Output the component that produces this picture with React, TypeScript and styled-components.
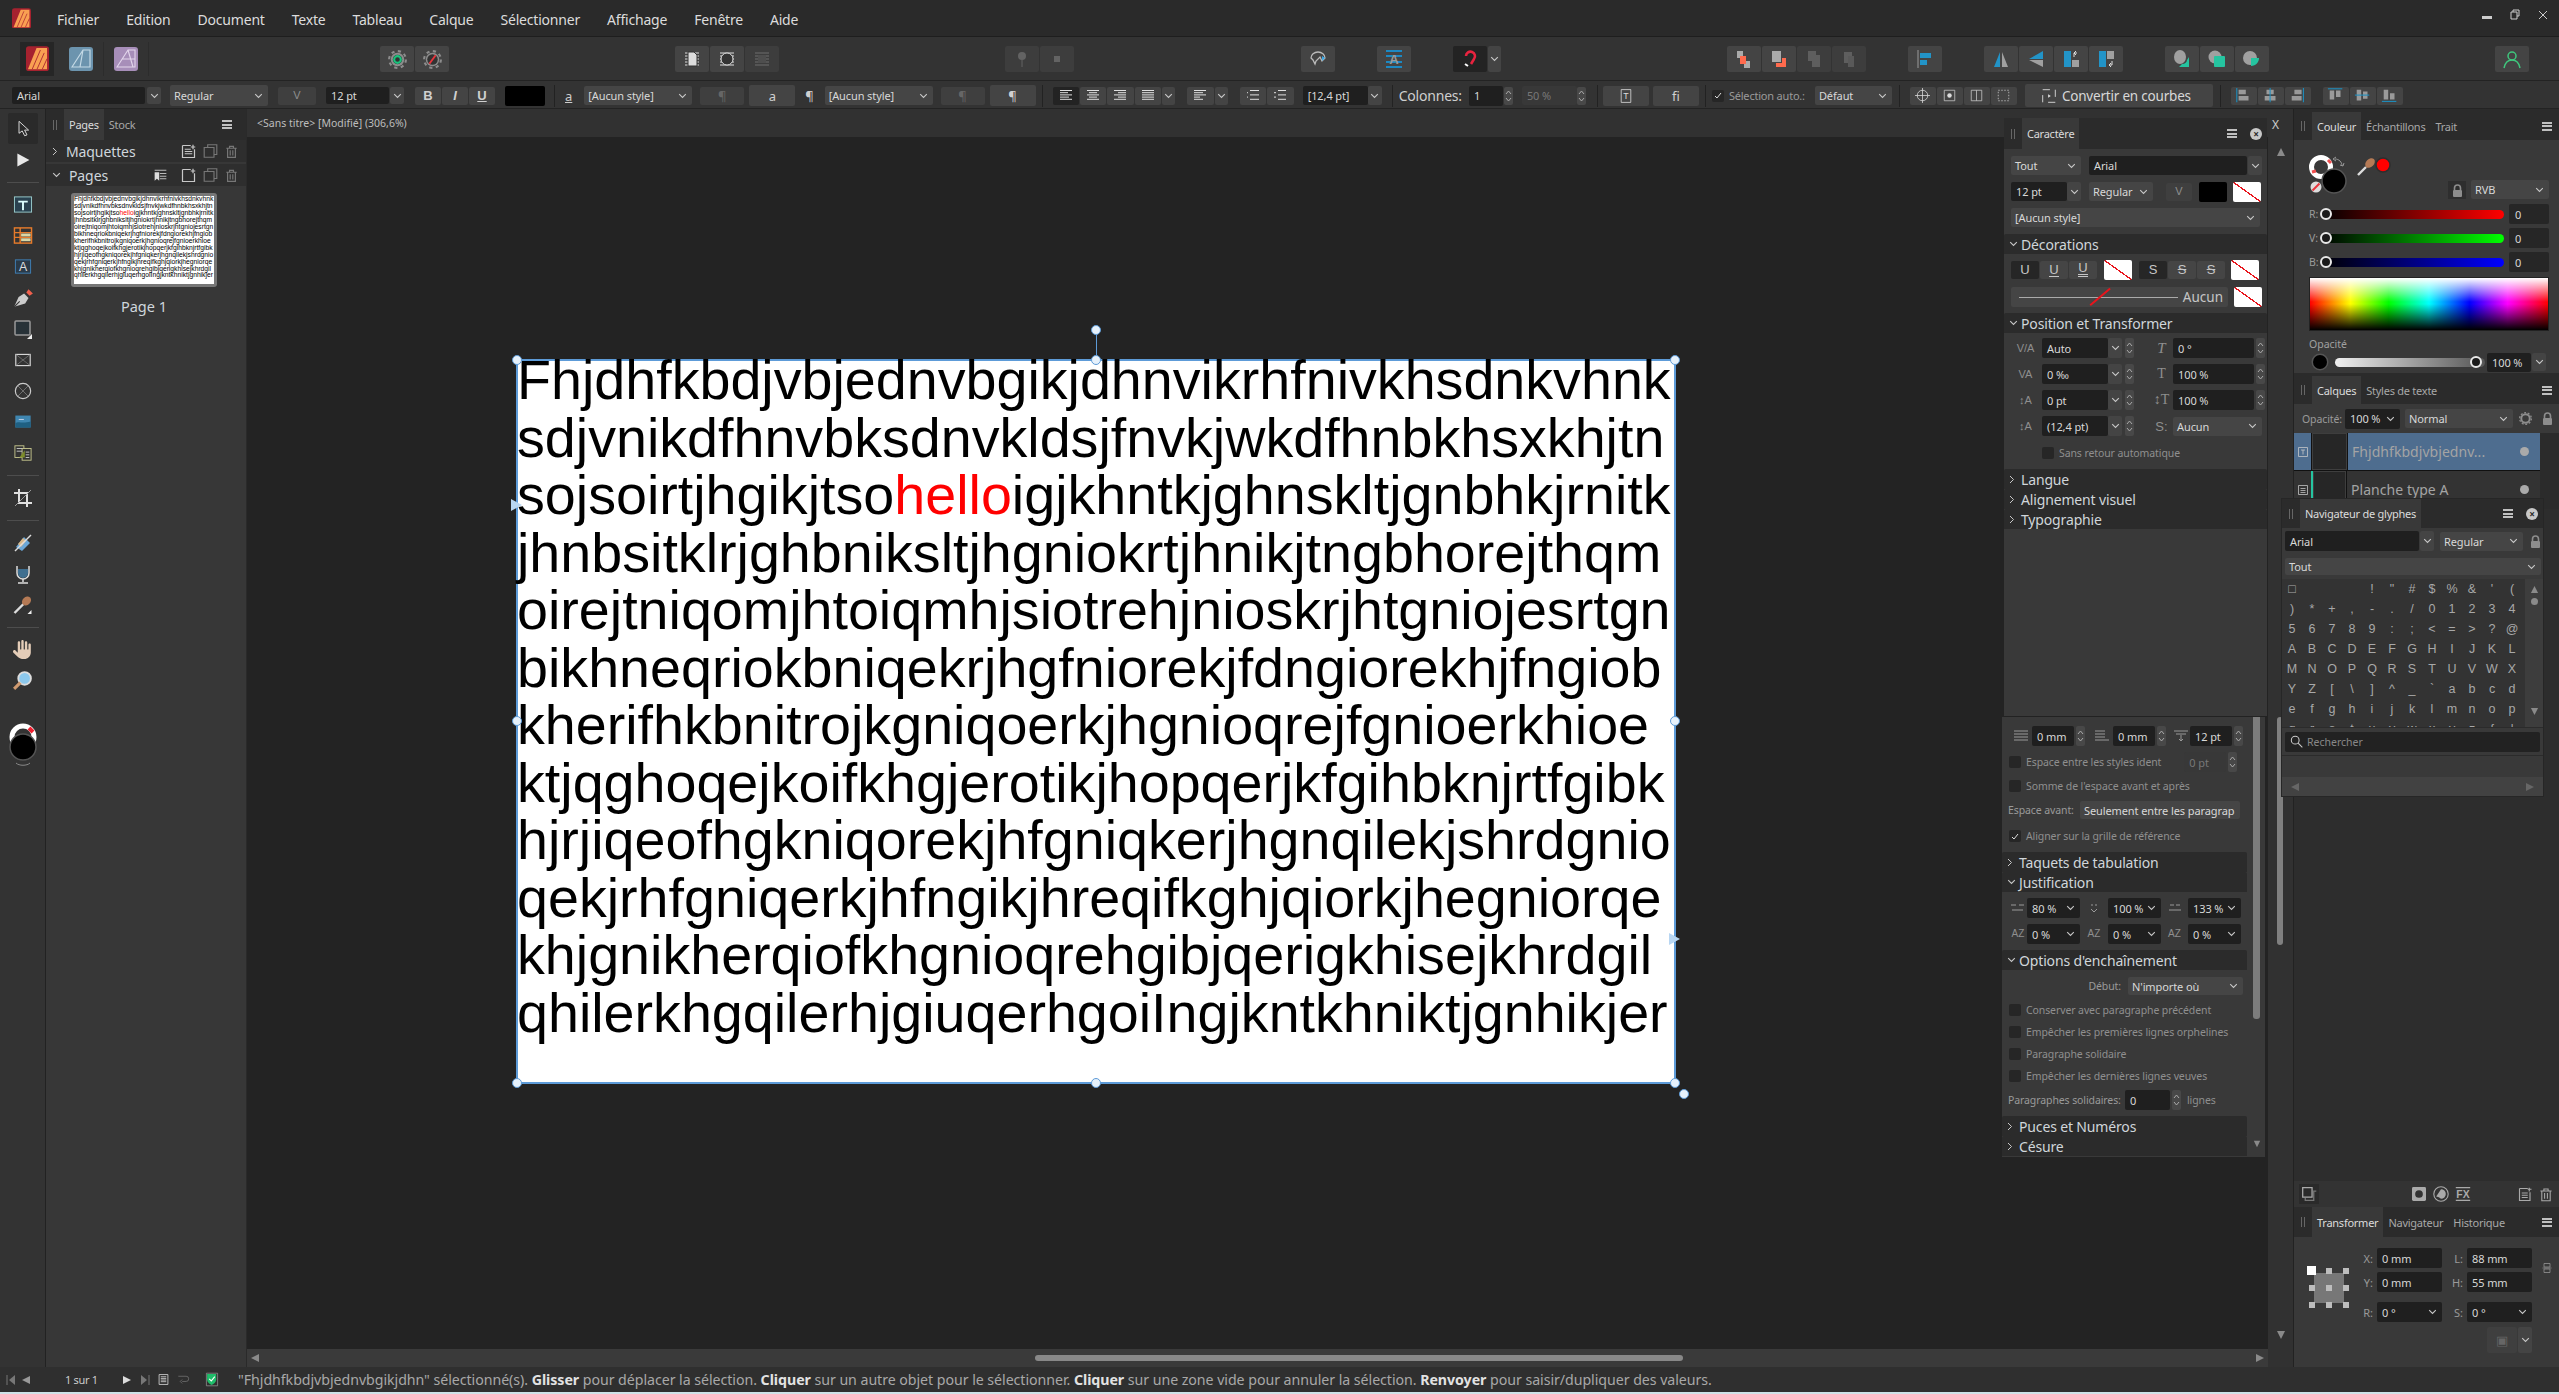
import React from 'react';
import styled, { createGlobalStyle } from 'styled-components';
import { FaHand } from 'react-icons/fa6';

const ui = `"Noto Sans", "Open Sans", sans-serif`;

const GlobalStyle = createGlobalStyle`
  html, body { margin: 0; padding: 0; background: #2a2a2a; }
  * { box-sizing: border-box; }
`;

const Window = styled.div`
  position: relative;
  width: 2559px;
  height: 1394px;
  display: flex;
  flex-direction: column;
  overflow: hidden;
  font-family: ${ui};
  color: #cfcfcf;
  background: #2a2a2a;
`;

/* ---------- menu ---------- */

const MenuBar = styled.div`
  height: 37px;
  flex: none;
  display: flex;
  align-items: center;
  padding-left: 12px;
  background: #2a2a2a;
  border-bottom: 1px solid #1e1e1e;
`;
const MenuItem = styled.span<{ $ml: number }>`
  margin-left: ${(p) => p.$ml}px;
  padding-top: 3px;
  font-size: 14px;
  letter-spacing: -0.2px;
  color: #dcdcdc;
`;
const WindowControls = styled.div`
  margin-left: auto;
  display: flex;
  align-items: center;
  gap: 18px;
  padding: 0 11px 6px 0;
  color: #d0d0d0;
`;

/* ---------- toolbars ---------- */

const MainBar = styled.div`
  height: 44px;
  flex: none;
  display: flex;
  align-items: center;
  padding: 1px 0 0 20px;
  background: #333333;
  border-bottom: 1px solid #232323;
`;
const AppSlot = styled.div<{ $active?: boolean; $ml?: number }>`
  width: ${(p) => (p.$active ? 34 : 45)}px;
  height: 34px;
  margin-left: ${(p) => p.$ml ?? 0}px;
  display: flex;
  align-items: center;
  justify-content: center;
  background: ${(p) => (p.$active ? '#262626' : 'transparent')};
  border-right: ${(p) => (p.$active ? 'none' : '1px solid #2c2c2c')};
`;
const ToolBtn = styled.div<{ $ml?: number; $dim?: boolean; $dark?: boolean; $w?: number }>`
  width: ${(p) => p.$w ?? 34}px;
  height: 26px;
  margin-left: ${(p) => p.$ml ?? 1}px;
  flex: none;
  display: flex;
  align-items: center;
  justify-content: center;
  border-radius: 2px;
  color: #bbb;
  background: ${(p) => (p.$dark ? '#232323' : p.$dim ? '#3d3d3d' : '#444444')};
  & > svg { opacity: ${(p) => (p.$dim ? 0.3 : 1)}; }
`;
const ContextBar = styled.div`
  height: 28px;
  flex: none;
  display: flex;
  align-items: center;
  padding: 2px 0 0 12px;
  background: #333333;
  border-bottom: 1px solid #232323;
`;
const Input = styled.div<{ $w: number; $ml?: number; $h?: number; $dim?: boolean; $right?: boolean }>`
  width: ${(p) => p.$w}px;
  height: ${(p) => p.$h ?? 19}px;
  margin-left: ${(p) => p.$ml ?? 0}px;
  flex: none;
  display: flex;
  align-items: center;
  justify-content: space-between;
  padding: 0 5px;
  border-radius: 2px;
  font-size: 11px;
  letter-spacing: -0.1px;
  white-space: nowrap;
  overflow: hidden;
  color: ${(p) => (p.$dim ? '#777' : '#d8d8d8')};
  background: ${(p) => (p.$dim ? '#383838' : '#1f1f1f')};
`;
const Select = styled.div<{ $w: number; $ml?: number; $h?: number }>`
  width: ${(p) => p.$w}px;
  height: ${(p) => p.$h ?? 19}px;
  margin-left: ${(p) => p.$ml ?? 0}px;
  flex: none;
  display: flex;
  align-items: center;
  justify-content: space-between;
  padding: 0 5px 0 4px;
  border-radius: 2px;
  font-size: 11px;
  letter-spacing: -0.1px;
  white-space: nowrap;
  overflow: hidden;
  color: #d8d8d8;
  background: #454545;
`;
const ChevBtn = styled.div<{ $ml?: number; $h?: number; $w?: number }>`
  width: ${(p) => p.$w ?? 14}px;
  height: ${(p) => p.$h ?? 19}px;
  margin-left: ${(p) => p.$ml ?? 1}px;
  flex: none;
  display: flex;
  align-items: center;
  justify-content: center;
  border-radius: 2px;
  background: #444444;
  color: #ccc;
`;
const SpinBtn = styled.div<{ $ml?: number; $h?: number }>`
  width: 9px;
  height: ${(p) => p.$h ?? 19}px;
  margin-left: ${(p) => p.$ml ?? 2}px;
  flex: none;
  display: flex;
  flex-direction: column;
  align-items: center;
  justify-content: center;
  gap: 2px;
  border-radius: 2px;
  background: #484848;
`;
const SmallBtn = styled.div<{ $w: number; $ml?: number; $h?: number; $dim?: boolean; $dark?: boolean }>`
  width: ${(p) => p.$w}px;
  height: ${(p) => p.$h ?? 18}px;
  margin-left: ${(p) => p.$ml ?? 1}px;
  flex: none;
  display: flex;
  align-items: center;
  justify-content: center;
  border-radius: 2px;
  font-size: 13px;
  color: ${(p) => (p.$dim ? '#666' : '#d0d0d0')};
  background: ${(p) => (p.$dark ? '#232323' : p.$dim ? '#3f3f3f' : '#444444')};
`;
const StyleBold = styled.b<{ $i?: boolean; $u?: boolean }>`
  font-family: "Liberation Sans", sans-serif;
  font-size: 13px;
  font-style: ${(p) => (p.$i ? 'italic' : 'normal')};
  text-decoration: ${(p) => (p.$u ? 'underline' : 'none')};
`;
const Swatch = styled.div<{ $w: number; $h?: number; $ml?: number }>`
  width: ${(p) => p.$w}px;
  height: ${(p) => p.$h ?? 20}px;
  margin-left: ${(p) => p.$ml ?? 0}px;
  flex: none;
  background: #000;
  border-radius: 2px;
`;
const NoneSwatch = styled.div<{ $ml?: number }>`
  width: 28px;
  height: 20px;
  margin-left: ${(p) => p.$ml ?? 0}px;
  flex: none;
  border-radius: 2px;
  background: linear-gradient(to top right, #fff 0 48%, #e8141c 48% 52%, #fff 52% 100%);
`;
const Sep = styled.div<{ $ml: number }>`
  width: 1px;
  height: 22px;
  margin-left: ${(p) => p.$ml}px;
  flex: none;
  background: #222;
`;
const BarLabel = styled.span<{ $ml: number; $size?: number; $dim?: boolean }>`
  margin-left: ${(p) => p.$ml}px;
  flex: none;
  font-size: ${(p) => p.$size ?? 11}px;
  letter-spacing: -0.2px;
  white-space: nowrap;
  color: ${(p) => (p.$dim ? '#9a9a9a' : '#cfcfcf')};
`;
const GlyphMark = styled.span<{ $ml: number }>`
  margin-left: ${(p) => p.$ml}px;
  font-size: 13px;
  color: #ccc;
  text-decoration: underline;
`;
const CheckBox = styled.div<{ $ml?: number; $checked?: boolean }>`
  width: 12px;
  height: 12px;
  margin-left: ${(p) => p.$ml ?? 0}px;
  flex: none;
  display: flex;
  align-items: center;
  justify-content: center;
  border-radius: 2px;
  background: #262626;
`;
const ConvertBtn = styled.div`
  width: 188px;
  height: 23px;
  margin-left: 8px;
  display: flex;
  align-items: center;
  gap: 4px;
  padding-left: 15px;
  flex: none;
  font-size: 13.5px;
  letter-spacing: -0.2px;
  border-radius: 2px;
  color: #d8d8d8;
  background: #444444;
`;

/* ---------- workspace ---------- */

const Workspace = styled.div`
  position: relative;
  flex: 1;
  min-height: 0;
  display: flex;
`;
const ToolColumn = styled.div`
  width: 46px;
  flex: none;
  display: flex;
  flex-direction: column;
  align-items: center;
  padding-top: 4px;
  background: #333333;
  border-right: 1px solid #222;
`;
const ToolSlot = styled.div<{ $active?: boolean }>`
  width: 30px;
  height: 31px;
  flex: none;
  display: flex;
  align-items: center;
  justify-content: center;
  border-radius: 2px;
  background: ${(p) => (p.$active ? '#2a2a2a' : 'transparent')};
`;
const ToolSep = styled.div`
  width: 32px;
  height: 1px;
  margin: 6.5px 0;
  flex: none;
  background: #4d4d4d;
`;
const ColorWidget = styled.div`
  margin-top: 24px;
  flex: none;
`;

const PagesPanel = styled.div`
  width: 201px;
  flex: none;
  display: flex;
  flex-direction: column;
  background: #373737;
  border-right: 1px solid #2a2a2a;
`;
const PanelHeader = styled.div<{ $h?: number }>`
  height: ${(p) => p.$h ?? 29}px;
  flex: none;
  display: flex;
  align-items: stretch;
  background: #2b2b2b;
`;
const Grip = styled.div`
  width: 18px;
  flex: none;
  display: flex;
  align-items: center;
  justify-content: center;
  gap: 2px;
  &::before, &::after { content: ''; width: 1px; height: 10px; background: #666; }
`;
const Tab = styled.div<{ $active?: boolean }>`
  padding: 0 5px;
  display: flex;
  align-items: center;
  font-size: 11px;
  letter-spacing: -0.25px;
  white-space: nowrap;
  color: ${(p) => (p.$active ? '#dcdcdc' : '#a8a8a8')};
  background: ${(p) => (p.$active ? '#393939' : 'transparent')};
`;
const Hamburger = styled.div<{ $mr?: number }>`
  margin-left: auto;
  margin-right: ${(p) => p.$mr ?? 7}px;
  align-self: center;
  width: 10px;
  height: 9px;
  flex: none;
  border-top: 2px solid #c0c0c0;
  border-bottom: 2px solid #c0c0c0;
  position: relative;
  &::after {
    content: '';
    position: absolute;
    left: 0;
    right: 0;
    top: 1.5px;
    height: 2px;
    background: #c0c0c0;
  }
`;
const CloseDot = styled.div`
  width: 12px;
  height: 12px;
  margin-right: 5px;
  margin-left: 6px;
  align-self: center;
  flex: none;
  border-radius: 50%;
  background: #c8c8c8;
  color: #2b2b2b;
  font-size: 10px;
  font-weight: 700;
  line-height: 12px;
  text-align: center;
`;
const SectionRow = styled.div<{ $mt?: number }>`
  height: 22px;
  margin-top: ${(p) => p.$mt ?? 0}px;
  flex: none;
  display: flex;
  align-items: center;
  padding-left: 6px;
  background: #2e2e2e;
  font-size: 14px;
  letter-spacing: -0.1px;
  color: #cfd6dc;
`;
const SectionName = styled.span`
  margin-left: 8px;
`;
const SectionIcons = styled.div`
  margin-left: auto;
  display: flex;
  align-items: center;
  gap: 7px;
  padding-right: 8px;
`;
const PagesFlag = styled.span`
  display: flex;
  margin-right: 6px;
`;
const Thumb = styled.div`
  width: 146px;
  height: 94px;
  margin: 7px 0 0 25px;
  flex: none;
  padding: 3px;
  border-radius: 3px;
  background: #777;
`;
const ThumbPage = styled.div`
  width: 140px;
  height: 88px;
  overflow: hidden;
  background: #fff;
  color: #000;
  font-family: "Liberation Sans", Arial, sans-serif;
  font-size: 6.72px;
  line-height: 6.95px;
  white-space: nowrap;
`;
const ThumbLabel = styled.div`
  margin-top: 9px;
  margin-left: 25px;
  width: 146px;
  text-align: center;
  font-size: 14.5px;
  color: #cfd6dc;
`;

const CanvasColumn = styled.div`
  width: 2021px;
  flex: none;
  display: flex;
  flex-direction: column;
`;
const DocTab = styled.div`
  height: 28px;
  flex: none;
  display: flex;
  align-items: center;
  padding-left: 10px;
  font-size: 10.5px;
  color: #bdbdbd;
  background: #313131;
`;
const Canvas = styled.div`
  flex: 1;
  min-height: 0;
  padding: 223px 0 0 270px;
  background: #232323;
  overflow: hidden;
`;
const Page = styled.div`
  position: relative;
  width: 1158px;
  height: 723px;
  background: #fff;
  outline: 2px solid #5d9bd8;
  outline-offset: -1px;
`;
const PageText = styled.div`
  margin-top: -8px;
  color: #000;
  font-family: "Liberation Sans", Arial, sans-serif;
  font-size: 55.65px;
  line-height: 57.5px;
  white-space: nowrap;
  position: absolute;
  top: 0;
  left: 0;
`;
const Red = styled.span`
  color: #ff0000;
`;
const Handle = styled.div<{ $x: number; $y: number }>`
  position: absolute;
  left: ${(p) => p.$x - 5}px;
  top: ${(p) => p.$y - 5}px;
  width: 10px;
  height: 10px;
  border-radius: 50%;
  background: #e6f1fb;
  border: 1.5px solid #5d9bd8;
`;
const RotateStem = styled.div`
  position: absolute;
  left: 579px;
  top: -30px;
  width: 1px;
  height: 30px;
  background: #5d9bd8;
`;
const TextPort = styled.div<{ $x: number; $y: number }>`
  position: absolute;
  left: ${(p) => p.$x - 6}px;
  top: ${(p) => p.$y - 6}px;
  width: 0;
  height: 0;
  border-left: 11px solid #b8d6f2;
  border-top: 6px solid transparent;
  border-bottom: 6px solid transparent;
`;
const HScroll = styled.div`
  height: 18px;
  flex: none;
  display: flex;
  align-items: center;
  justify-content: space-between;
  padding: 0 3px;
  position: relative;
  background: #3a3a3a;
`;
const HThumb = styled.div`
  position: absolute;
  left: 788px;
  top: 6px;
  width: 648px;
  height: 6px;
  border-radius: 3px;
  background: #888;
`;
const CanvasGutter = styled.div`
  width: 26px;
  flex: none;
  position: relative;
  background: #313131;
  border-right: 1px solid #222;
`;
const GutterClose = styled.div`
  position: absolute;
  top: 7px;
  left: 4px;
  font-size: 12px;
  color: #ccc;
`;
const GutterUp = styled.div`
  position: absolute;
  top: 31px;
  left: 8px;
`;
const GutterThumb = styled.div`
  position: absolute;
  top: 608px;
  left: 9px;
  width: 6px;
  height: 228px;
  border-radius: 3px;
  background: #808080;
`;
const GutterDown = styled.div`
  position: absolute;
  bottom: 22px;
  left: 8px;
`;

/* ---------- right dock ---------- */

const RightDock = styled.div`
  flex: 1;
  min-width: 0;
  display: flex;
  flex-direction: column;
  padding-top: 3px;
  background: #2b2b2b;
`;
const ColorBody = styled.div`
  height: 233px;
  flex: none;
  padding: 0 10px 0 15px;
  position: relative;
  background: #393939;
`;
const ColorWell = styled.div`
  height: 62px;
  display: flex;
  justify-content: flex-end;
  align-items: flex-end;
  gap: 5px;
  padding-bottom: 3px;
`;
const LockBtn = styled.div`
  width: 18px;
  height: 18px;
  display: flex;
  align-items: center;
  justify-content: center;
  background: #2e2e2e;
`;
const ColorCluster = styled.svg`
  position: absolute;
  left: 14px;
  top: 10px;
`;
const SliderRow = styled.div`
  height: 24px;
  display: flex;
  align-items: center;
  font-size: 10.5px;
  color: #9a9a9a;
`;
const SliderLabel = styled.span`
  width: 12px;
  flex: none;
`;
const Track = styled.div<{ $to: string; $w: number }>`
  position: relative;
  width: ${(p) => p.$w}px;
  height: 9px;
  flex: none;
  border-radius: 5px;
  background: linear-gradient(to right, #000, ${(p) => p.$to});
`;
const Knob = styled.div<{ $x: number }>`
  position: absolute;
  left: ${(p) => p.$x - 6}px;
  top: -1.5px;
  width: 12px;
  height: 12px;
  border-radius: 50%;
  background: #1a1a1a;
  border: 2px solid #e8e8e8;
`;
const ValueBox = styled.div`
  width: 40px;
  height: 20px;
  margin-left: 5px;
  flex: none;
  display: flex;
  align-items: center;
  padding-left: 6px;
  font-size: 11px;
  color: #d8d8d8;
  border-radius: 2px;
  background: #262626;
`;
const Spectrum = styled.div`
  height: 54px;
  margin-top: 3px;
  border: 1px solid #222;
  background:
    linear-gradient(to bottom, #fff 0%, rgba(255, 255, 255, 0) 46%, rgba(0, 0, 0, 0) 50%, #000 100%),
    linear-gradient(to right, #f00 0%, #ff0 17%, #0f0 33%, #0ff 50%, #00f 67%, #f0f 83%, #f00 100%);
`;
const SmallCaption = styled.div`
  margin-top: 6px;
  font-size: 10.5px;
  color: #a0a0a0;
`;
const OpacityRow = styled.div`
  height: 22px;
  display: flex;
  align-items: center;
`;
const OpacityDot = styled.div`
  width: 14px;
  height: 14px;
  margin-left: 4px;
  flex: none;
  border-radius: 50%;
  background: #000;
  box-shadow: 0 0 0 1.5px #555;
`;
const OpacityTrack = styled.div`
  position: relative;
  width: 150px;
  height: 9px;
  margin-left: 8px;
  flex: none;
  border-radius: 5px;
  background: linear-gradient(to right, #f0f0f0, #555);
`;
const LayersPanel = styled.div`
  flex: 1;
  min-height: 0;
  margin-top: 3px;
  display: flex;
  flex-direction: column;
  background: #2b2b2b;
`;
const LayerControls = styled.div`
  height: 29px;
  flex: none;
  display: flex;
  align-items: center;
  padding-left: 8px;
  background: #393939;
`;
const LayerRow = styled.div<{ $selected?: boolean; $h: number }>`
  width: 246px;
  height: ${(p) => p.$h}px;
  flex: none;
  display: flex;
  align-items: stretch;
  background: ${(p) => (p.$selected ? '#4e6d8f' : '#333')};
  border-bottom: 1px solid #111;
`;
const LayerKind = styled.div`
  width: 18px;
  flex: none;
  display: flex;
  align-items: center;
  justify-content: center;
  border-right: 1px solid #111;
`;
const LayerThumb = styled.div<{ $mark?: boolean }>`
  width: 36px;
  flex: none;
  border-right: 1px solid #111;
  background: #262626;
  border-left: ${(p) => (p.$mark ? '2px solid #25c4a0' : 'none')};
  margin-left: ${(p) => (p.$mark ? '-1px' : 0)};
  box-shadow: inset 0 0 0 1px #3e3e3e;
`;
const LayerName = styled.div`
  flex: 1;
  min-width: 0;
  padding-left: 4px;
  align-self: center;
  font-size: 14px;
  letter-spacing: 0.05px;
  color: #a4a4a4;
  white-space: nowrap;
`;
const LayerDot = styled.div`
  width: 9px;
  height: 9px;
  margin-right: 11px;
  align-self: center;
  flex: none;
  border-radius: 50%;
  background: #aaa;
`;
const LayerEmpty = styled.div`
  flex: 1;
  min-height: 0;
  background: #2d2d2d;
`;
const LayerStrip = styled.div`
  height: 26px;
  flex: none;
  display: flex;
  align-items: center;
  padding: 0 6px 0 5px;
  background: #333;
`;
const StripActive = styled.div`
  width: 20px;
  height: 20px;
  display: flex;
  align-items: center;
  justify-content: center;
  background: #2a2a2a;
`;
const StripCenter = styled.div`
  margin-left: 92px;
  display: flex;
  align-items: center;
  gap: 6px;
`;
const StripRight = styled.div`
  margin-left: auto;
  display: flex;
  align-items: center;
  gap: 6px;
`;
const TransformBody = styled.div`
  height: 130px;
  flex: none;
  display: flex;
  padding: 11px 0 0 15px;
  background: #393939;
`;
const AnchorGrid = styled.div`
  position: relative;
  width: 40px;
  height: 40px;
  margin-top: 20px;
  flex: none;
  display: grid;
  grid-template-columns: repeat(3, 6px);
  grid-template-rows: repeat(3, 6px);
  justify-content: space-between;
  align-content: space-between;
  background: linear-gradient(#777, #777) center / 30px 30px no-repeat;
`;
const AnchorDot = styled.i<{ $on?: boolean }>`
  width: ${(p) => (p.$on ? 9 : 6)}px;
  height: ${(p) => (p.$on ? 9 : 6)}px;
  margin: ${(p) => (p.$on ? '-2px 0 0 -2px' : 0)};
  background: ${(p) => (p.$on ? '#fff' : '#bdbdbd')};
`;
const TransformFields = styled.div`
  margin-left: 13px;
  display: flex;
  flex-direction: column;
`;
const TfRow = styled.div<{ $mt?: number }>`
  height: 20px;
  margin-top: ${(p) => p.$mt ?? 0}px;
  display: flex;
  align-items: center;
`;
const TfLabel = styled.span<{ $w: number }>`
  width: ${(p) => p.$w}px;
  padding-right: 4px;
  flex: none;
  text-align: right;
  font-size: 11px;
  color: #9a9a9a;
`;
const ChainLink = styled.span`
  display: flex;
  margin-left: 10px;
  margin-top: 20px;
`;

/* ---------- floating panels ---------- */

const CharacterFloat = styled.div`
  position: absolute;
  left: 2002px;
  top: 9px;
  width: 267px;
  height: 1039px;
  display: flex;
  flex-direction: column;
`;
const CharacterPanel = styled.div`
  width: 263px;
  margin-left: 2px;
  height: 599px;
  flex: none;
  display: flex;
  flex-direction: column;
  background: #393939;
  border-bottom: 1px solid #222;
`;
const CharHeader = styled(PanelHeader)`
  height: 31px;
  background: #2b2b2b;
`;
const CharRow = styled.div<{ $h?: number; $pl?: number; $mt?: number }>`
  height: ${(p) => p.$h ?? 19}px;
  margin-top: ${(p) => p.$mt ?? 0}px;
  flex: none;
  display: flex;
  align-items: center;
  padding-left: ${(p) => p.$pl ?? 7}px;
`;
const Fold = styled.div<{ $mt?: number }>`
  height: 20px;
  margin-top: ${(p) => p.$mt ?? 0}px;
  flex: none;
  display: flex;
  align-items: center;
  gap: 3px;
  padding-left: 5px;
  font-size: 14px;
  letter-spacing: -0.15px;
  white-space: nowrap;
  color: #d0d6da;
  background: #2b2b2b;
  border-radius: 2px 2px 0 0;
`;
const FoldGlyph = styled.span`
  width: 9px;
  display: flex;
  align-items: center;
  color: #ccc;
`;
const Deco = styled.div<{ $dark?: boolean; $ml?: number }>`
  width: 28px;
  height: 18px;
  flex: none;
  margin-left: ${(p) => p.$ml ?? 0}px;
  margin-right: 1px;
  display: flex;
  align-items: center;
  justify-content: center;
  font-family: "Liberation Sans", sans-serif;
  font-size: 13px;
  color: #c6c6c6;
  border-radius: 2px;
  background: ${(p) => (p.$dark ? '#262626' : '#454545')};
`;
const DecoDouble = styled.span`
  border-bottom: 3px double #c6c6c6;
  line-height: 12px;
`;
const DecoSingle = styled.span`
  border-bottom: 1px solid #c6c6c6;
  line-height: 13px;
`;
const DecoStrike = styled.span`
  text-decoration: line-through;
`;
const DecoLine = styled.div`
  position: relative;
  width: 217px;
  height: 20px;
  margin-left: 0;
  flex: none;
  display: flex;
  align-items: center;
  justify-content: flex-end;
  padding-right: 5px;
  font-size: 13.5px;
  color: #c6c6c6;
  border-radius: 2px;
  background: #454545;
  overflow: hidden;
  &::before {
    content: '';
    position: absolute;
    left: 8px;
    width: 159px;
    top: 10px;
    height: 1px;
    background: #aaa;
  }
  &::after {
    content: '';
    position: absolute;
    left: 76px;
    top: 9px;
    width: 26px;
    height: 1.5px;
    background: #e8141c;
    transform: rotate(-40deg);
  }
`;
const FieldIcon = styled.div<{ $w?: number; $ml?: number }>`
  width: ${(p) => p.$w ?? 23}px;
  margin-left: ${(p) => p.$ml ?? 0}px;
  flex: none;
  display: flex;
  align-items: center;
  justify-content: center;
`;
const Dim = styled.span<{ $ml?: number }>`
  margin-left: ${(p) => p.$ml ?? 5}px;
  font-size: 10.5px;
  letter-spacing: -0.1px;
  white-space: nowrap;
  color: #8f8f8f;
`;
const ParagraphPanel = styled.div`
  position: relative;
  width: 263px;
  flex: 1;
  min-height: 0;
  display: flex;
  background: #393939;
`;
const ParaMain = styled.div`
  width: 245px;
  flex: none;
  display: flex;
  flex-direction: column;
`;
const ParaScrollThumb = styled.div`
  position: absolute;
  left: 251px;
  top: 0;
  width: 7px;
  height: 302px;
  border-radius: 0 0 3px 3px;
  background: #7c7c7c;
`;
const ParaScrollDown = styled.div`
  position: absolute;
  left: 251px;
  bottom: 4px;
`;
const RowLabel = styled.span<{ $w?: number; $right?: boolean }>`
  width: ${(p) => (p.$w ? `${p.$w}px` : 'auto')};
  flex: none;
  text-align: ${(p) => (p.$right ? 'right' : 'left')};
  font-size: 10.5px;
  letter-spacing: -0.1px;
  white-space: nowrap;
  color: #9a9a9a;
`;

const GlyphFloat = styled.div`
  position: absolute;
  left: 2282px;
  top: 390px;
  width: 261px;
  height: 297px;
  display: flex;
  flex-direction: column;
  background: #393939;
  box-shadow: 0 0 0 1px #262626;
`;
const GlyphFilters = styled.div`
  flex: none;
  display: flex;
  flex-direction: column;
  gap: 7px;
  padding: 3px 2px 4px 3px;
`;
const GlyphRow = styled.div`
  display: flex;
  align-items: center;
`;
const GlyphBody = styled.div`
  height: 148px;
  flex: none;
  display: flex;
  background: #333;
  overflow: hidden;
`;
const GlyphGrid = styled.div`
  width: 243px;
  flex: none;
  display: grid;
  grid-template-columns: repeat(12, 20px);
  grid-auto-rows: 20px;
  font-family: "Liberation Sans", Arial, sans-serif;
  font-size: 12.5px;
  color: #a8a8a8;
`;
const GlyphCell = styled.span`
  display: flex;
  align-items: center;
  justify-content: center;
`;
const GlyphScroll = styled.div`
  flex: 1;
  display: flex;
  flex-direction: column;
  align-items: center;
  padding: 6px 0;
  gap: 4px;
  background: #3d3d3d;
`;
const GlyphScrollDot = styled.div`
  width: 7px;
  height: 7px;
  border-radius: 50%;
  background: #8a8a8a;
`;
const GlyphPush = styled.div`
  margin-top: auto;
`;
const SearchBar = styled.div`
  height: 29px;
  flex: none;
  display: flex;
  align-items: center;
  padding: 0 3px;
  border-top: 1px solid #2b2b2b;
  border-bottom: 1px solid #2b2b2b;
`;
const SearchInput = styled.div`
  width: 255px;
  height: 20px;
  display: flex;
  align-items: center;
  gap: 4px;
  padding-left: 5px;
  font-size: 10.5px;
  color: #888;
  border-radius: 2px;
  background: #222;
`;
const GlyphFoot = styled.div`
  flex: 1;
  margin-top: 21px;
  display: flex;
  align-items: center;
  justify-content: space-between;
  padding: 0 8px;
  background: #424242;
`;
const SmallIconWrap = styled.div`
  width: 20px;
  margin-left: 2px;
  flex: none;
  display: flex;
  align-items: center;
  justify-content: center;
`;

/* ---------- status ---------- */

const StatusBar = styled.div`
  height: 25px;
  flex: none;
  display: flex;
  align-items: center;
  padding-left: 6px;
  background: #2f2f2f;
`;
const NavGroup = styled.div<{ $ml?: number; $gap?: number }>`
  margin-left: ${(p) => p.$ml ?? 0}px;
  display: flex;
  align-items: center;
  gap: ${(p) => p.$gap ?? 5}px;
`;
const PageCount = styled.span`
  margin-left: 34px;
  width: 34px;
  font-size: 11px;
  letter-spacing: -0.3px;
  white-space: nowrap;
  color: #ccc;
`;
const StatusText = styled.div`
  margin-left: 19px;
  font-size: 14.2px;
  letter-spacing: -0.05px;
  color: #a8a8a8;
  white-space: nowrap;
  & b { color: #e2e2e2; }
`;
const BottomEdge = styled.div`
  height: 2px;
  flex: none;
  background: #cfe3e8;
`;

/* ---------- drawings ---------- */

type SvgProps = { w?: number; h?: number; children?: React.ReactNode };
const Ico = ({ w = 20, h = 20, children }: SvgProps) => (
  <svg width={w} height={h} viewBox="0 0 20 20" fill="none">{children}</svg>
);

const Chev = ({ c = '#c8c8c8' }: { c?: string }) => (
  <svg width="9" height="6" viewBox="0 0 9 6" fill="none"><path d="M1.2 1.2 4.5 4.5 7.8 1.2" stroke={c} strokeWidth="1.1" /></svg>
);
const ChevRight = () => (
  <svg width="6" height="9" viewBox="0 0 6 9" fill="none"><path d="M1 1l3.5 3.5L1 8" stroke="#c8c8c8" strokeWidth="1" /></svg>
);
const SpinArrows = () => (
  <>
    <svg width="7" height="5" viewBox="0 0 7 5" fill="none"><path d="M1 4l2.5-3L6 4" stroke="#aaa" /></svg>
    <svg width="7" height="5" viewBox="0 0 7 5" fill="none"><path d="M1 1l2.5 3L6 1" stroke="#aaa" /></svg>
  </>
);
const Spin = ({ ml, h }: { ml?: number; h?: number }) => (
  <SpinBtn $ml={ml} $h={h}><SpinArrows /></SpinBtn>
);

const PublisherLogo = ({ s = 24 }: { s?: number }) => (
  <svg width={s} height={s * 1.1} viewBox="0 0 24 26" fill="none">
    <rect width="24" height="26" rx="3" fill="#a6222f" />
    <path d="M2 24 11 2h11v22z" fill="#f9a052" />
    <path d="M6.5 24 15 4M11.5 24 19 7M17 24l5-11" stroke="#a6222f" strokeWidth="0.9" />
  </svg>
);
const DesignerLogo = () => (
  <svg width="24" height="24" viewBox="0 0 24 24" fill="none">
    <rect width="24" height="24" rx="3" fill="#6c94ae" />
    <path d="M3 20 14 3h7v17zM3 20h18M14 3l-3 17" stroke="#c4d9e5" strokeWidth="1.2" />
  </svg>
);
const PhotoLogo = () => (
  <svg width="24" height="24" viewBox="0 0 24 24" fill="none">
    <rect width="24" height="24" rx="3" fill="#a78eb9" />
    <path d="M3 20 14 3h7v17zM8 12h13M14 3l5 17M3 20h14" stroke="#e3d6ec" strokeWidth="1.1" />
  </svg>
);

const Gear = ({ core }: { core: React.ReactNode }) => (
  <Ico w={21} h={21}>
    <circle cx="10" cy="10" r="8" stroke="#8d8d8d" strokeWidth="2" strokeDasharray="3 3.3" />
    <circle cx="10" cy="10" r="6.4" fill="#8d8d8d" />
    {core}
  </Ico>
);
const WrapIcon = ({ kind }: { kind: 'page' | 'disc' | 'x' }) => (
  <Ico>
    <path d="M3 4h14M3 7h14M3 10h14M3 13h14M3 16h14" stroke="#ddd" strokeWidth="1" />
    {kind === 'page' && <path d="M6 3h6l3 3v11H6z" fill="#ddd" stroke="#333" />}
    {kind === 'disc' && <circle cx="10" cy="10" r="6" fill="#333" stroke="#ddd" />}
    {kind === 'x' && <rect x="6" y="6" width="8" height="8" fill="#777" />}
  </Ico>
);
const Squares = ({ a, b, c = '#ff6a4d' }: { a: string; b: string; c?: string }) => (
  <Ico>
    <path d={a} fill="#aaa" />
    <path d={b} fill={c} />
  </Ico>
);
const AlignBars = ({ d, rule }: { d: string; rule: string }) => (
  <Ico w={18} h={18}>
    <path d={d} fill="#9a9a9a" />
    <path d={rule} stroke="#1d8fc0" strokeWidth="1.2" />
  </Ico>
);
const TextAlign = ({ rows }: { rows: number[][] }) => (
  <svg width="14" height="14" viewBox="0 0 14 14" fill="none">
    {rows.map(([x, w], i) => (
      <path key={i} d={`M${x} ${1.5 + i * 2.2}h${w}`} stroke="#e0e0e0" strokeWidth="1" />
    ))}
  </svg>
);
const Lock = ({ c = '#8d8d8d' }: { c?: string }) => (
  <svg width="11" height="13" viewBox="0 0 11 13" fill="none">
    <path d="M2.5 6V4a3 3 0 0 1 6 0v2" stroke={c} strokeWidth="1.6" />
    <rect x="1" y="6" width="9" height="7" rx="1" fill={c} />
  </svg>
);
const Trash = () => (
  <Ico w={13} h={15}>
    <path d="M2 5h16M7 5V2h6v3M4 5v14h12V5M8 8v8M12 8v8" stroke="#777" strokeWidth="1.8" />
  </Ico>
);
const NewPage = ({ lines, c = '#c8c8c8' }: { lines?: boolean; c?: string }) => (
  <Ico w={15} h={15}>
    <path d="M2 2h11M2 2v16h16V7" stroke={c} strokeWidth="1.6" />
    <path d="M16 1v6M13 4h6" stroke={c} strokeWidth="1.6" />
    {lines && <path d="M5 7h8M5 10h10M5 13h10" stroke={c} strokeWidth="1.6" />}
  </Ico>
);
const DupPage = () => (
  <Ico w={15} h={14}>
    <path d="M6 5V1h13v14h-4M1 5h14v14H1z" stroke="#777" strokeWidth="1.6" />
  </Ico>
);
const Triangle = ({ dir, c = '#8a8a8a', s = 10 }: { dir: 'u' | 'd' | 'l' | 'r'; c?: string; s?: number }) => {
  const pts = { u: '5,1 9,9 1,9', d: '1,1 9,1 5,9', l: '9,1 9,9 1,5', r: '1,1 9,5 1,9' }[dir];
  return <svg width={s} height={s} viewBox="0 0 10 10"><polygon points={pts} fill={c} /></svg>;
};

const PAGE_LINES: React.ReactNode[] = [
  'Fhjdhfkbdjvbjednvbgikjdhnvikrhfnivkhsdnkvhnk',
  'sdjvnikdfhnvbksdnvkldsjfnvkjwkdfhnbkhsxkhjtn',
  <>sojsoirtjhgikjtso<Red>hello</Red>igjkhntkjghnskltjgnbhkjrnitk</>,
  'jhnbsitklrjghbniksltjhgniokrtjhnikjtngbhorejthqm',
  'oirejtniqomjhtoiqmhjsiotrehjnioskrjhtgniojesrtgn',
  'bikhneqriokbniqekrjhgfniorekjfdngiorekhjfngiob',
  'kherifhkbnitrojkgniqoerkjhgnioqrejfgnioerkhioe',
  'ktjqghoqejkoifkhgjerotikjhopqerjkfgihbknjrtfgibk',
  'hjrjiqeofhgkniqorekjhfgniqkerjhgnqilekjshrdgnio',
  'qekjrhfgniqerkjhfngikjhreqifkghjqiorkjhegniorqe',
  'khjgnikherqiofkhgnioqrehgibjqerigkhisejkhrdgil',
  'qhilerkhgqilerhjgiuqerhgoiIngjkntkhniktjgnhikjer',
];
const PageLines = () => (
  <>
    {PAGE_LINES.map((line, i) => (
      <div key={i}>{line}</div>
    ))}
  </>
);

const MENU = ['Fichier', 'Edition', 'Document', 'Texte', 'Tableau', 'Calque', 'Sélectionner', 'Affichage', 'Fenêtre', 'Aide'];

const GLYPHS = [
  '□', '', '', '', '!', '"', '#', '$', '%', '&', "'", '(',
  ')', '*', '+', ',', '-', '.', '/', '0', '1', '2', '3', '4',
  '5', '6', '7', '8', '9', ':', ';', '<', '=', '>', '?', '@',
  'A', 'B', 'C', 'D', 'E', 'F', 'G', 'H', 'I', 'J', 'K', 'L',
  'M', 'N', 'O', 'P', 'Q', 'R', 'S', 'T', 'U', 'V', 'W', 'X',
  'Y', 'Z', '[', '\\', ']', '^', '_', '`', 'a', 'b', 'c', 'd',
  'e', 'f', 'g', 'h', 'i', 'j', 'k', 'l', 'm', 'n', 'o', 'p',
  'q', 'r', 's', 't', 'u', 'v', 'w', 'x', 'y', 'z', '{', '|',
];

const SmallIcon = ({ d }: { d: string }) => (
  <svg width="16" height="14" viewBox="0 0 16 14" fill="none">
    <path d={d} stroke="#9a9a9a" strokeWidth="1" />
  </svg>
);
const TextGlyph = styled.span<{ $size?: number; $serif?: boolean; $i?: boolean }>`
  font-family: ${(p) => (p.$serif ? '"Liberation Serif"' : '"Liberation Sans"')}, sans-serif;
  font-size: ${(p) => p.$size ?? 12}px;
  font-style: ${(p) => (p.$i ? 'italic' : 'normal')};
  line-height: 1;
  color: #8f8f8f;
`;

const App = () => {
  return (
    <Window>
      <GlobalStyle />

      <MenuBar>
        <PublisherLogo s={19} />
        {MENU.map((label, i) => (
          <MenuItem key={label} $ml={i === 0 ? 26 : 27}>{label}</MenuItem>
        ))}
        <WindowControls>
          <svg width="10" height="8" viewBox="0 0 10 8"><rect y="5" width="10" height="3" fill="#ccc" /></svg>
          <svg width="10" height="12" viewBox="0 0 10 12" fill="none"><path d="M3 3V1h6v6H7M1 3h6v7H1z" stroke="#ccc" /></svg>
          <svg width="10" height="10" viewBox="0 0 10 10" fill="none"><path d="M1 1l8 8M9 1 1 9" stroke="#ccc" /></svg>
        </WindowControls>
      </MenuBar>

      <MainBar>
        <AppSlot $active><PublisherLogo s={23} /></AppSlot>
        <AppSlot $ml={5}><DesignerLogo /></AppSlot>
        <AppSlot><PhotoLogo /></AppSlot>

        <ToolBtn $ml={231}><Gear core={<><circle cx="10" cy="10" r="4.5" fill="#333" /><circle cx="10" cy="10" r="3.2" stroke="#19c37d" strokeWidth="2" /></>} /></ToolBtn>
        <ToolBtn><Gear core={<><circle cx="10" cy="10" r="5" fill="#333" /><path d="M7 14l6-8" stroke="#e8343c" strokeWidth="1.8" /></>} /></ToolBtn>

        <ToolBtn $ml={226}><WrapIcon kind="page" /></ToolBtn>
        <ToolBtn><WrapIcon kind="disc" /></ToolBtn>
        <ToolBtn $dim><WrapIcon kind="x" /></ToolBtn>

        <ToolBtn $ml={226} $dim><Ico><circle cx="10" cy="7" r="4" fill="#bbb" /><path d="M10 11v7" stroke="#bbb" /></Ico></ToolBtn>
        <ToolBtn $dim><Ico><rect x="7" y="7" width="6" height="6" fill="#bbb" /></Ico></ToolBtn>

        <ToolBtn $ml={227}><Ico><path d="M3 9a7 6 0 0 1 14 0l-3 3-2-4-4 4-1 3-2-4z" stroke="#bbb" strokeWidth="1.3" /><path d="M14 7l3 2-3 3z" fill="#38a8e8" /></Ico></ToolBtn>
        <ToolBtn $ml={42}><Ico><path d="M2 2h16M2 7h16M2 13h16M2 18h16" stroke="#0fa0ee" strokeWidth="1.4" /><text x="10" y="15" textAnchor="middle" fontSize="13" fontWeight="700" fontFamily="Liberation Sans" fill="#999">A</text></Ico></ToolBtn>
        <ToolBtn $ml={42} $dark><Ico><path d="M6 7a4.5 4.5 0 1 1 8 3l-3 5" stroke="#e8233f" strokeWidth="2.6" /><path d="M5 15l3 2" stroke="#fff" strokeWidth="2" /></Ico></ToolBtn>
        <ToolBtn $w={13}><Chev /></ToolBtn>

        <ToolBtn $ml={226}><Squares a="M3 2h6v7H3zM10 12h6v7h-6z" b="M6 7h6v8H6z" /></ToolBtn>
        <ToolBtn><Squares a="M3 2h9v11H3z" b="M13 9h4v9H7v-4h6z" /></ToolBtn>
        <ToolBtn $dim><Squares a="M4 2h8v10H4zM8 6h8v12H8z" b="" /></ToolBtn>
        <ToolBtn $dim><Squares a="M5 3h8v11H5z" b="M9 7h6v11H9z" c="#999" /></ToolBtn>

        <ToolBtn $ml={42}><Ico><path d="M3 1v18" stroke="#9a9a9a" /><path d="M5 4h11v5H5zM5 11h7v5H5z" fill="#2294c8" /></Ico></ToolBtn>

        <ToolBtn $ml={42}><Ico><path d="M9 3v15H3z" fill="#2294c8" /><path d="M11 3v15h6z" fill="#a0a0a0" /></Ico></ToolBtn>
        <ToolBtn><Ico><path d="M17 2v8H3z" fill="#2294c8" /><path d="M17 18v-7H3z" fill="#a0a0a0" /></Ico></ToolBtn>
        <ToolBtn><Ico><path d="M3 2h7v16H3z" fill="#2294c8" /><path d="M11 11h7v7h-7z" fill="#a0a0a0" /><path d="M13 8V4h3M13 4l2-2M13 4l2 2" stroke="#ddd" /></Ico></ToolBtn>
        <ToolBtn><Ico><path d="M3 2h7v16H3z" fill="#2294c8" /><path d="M11 2h7v8h-7z" fill="#a0a0a0" /><path d="M16 12v4h-3M13 16l2-2M13 16l2 2" stroke="#ddd" /></Ico></ToolBtn>

        <ToolBtn $ml={42}><Ico><ellipse cx="8" cy="8" rx="6" ry="7" fill="#a0a0a0" /><path d="M17 8v10H7l3-3c3 0 5-2 5-4z" fill="#25c4a0" /></Ico></ToolBtn>
        <ToolBtn><Ico><circle cx="8" cy="8" r="6.5" fill="#a0a0a0" /><rect x="7" y="7" width="11" height="11" rx="1" fill="#25c4a0" /></Ico></ToolBtn>
        <ToolBtn><Ico><circle cx="8" cy="9" r="7" fill="#a0a0a0" /><path d="M9 9h8c0 4-3 8-8 8z" fill="#25c4a0" /></Ico></ToolBtn>

        <ToolBtn $ml={226}><Ico><circle cx="10" cy="7" r="4" stroke="#3fc77d" strokeWidth="1.5" /><path d="M2 19c1-5 4-8 8-8s7 3 8 8" stroke="#3fc77d" strokeWidth="1.5" /></Ico></ToolBtn>
      </MainBar>

      <ContextBar>
        <Input $w={133} $h={17}>Arial</Input>
        <ChevBtn $ml={2} $h={17}><Chev /></ChevBtn>
        <Select $w={98} $ml={9} $h={21}>Regular<Chev /></Select>
        <SmallBtn $w={38} $ml={10} $dim><TextGlyph $size={11}>V</TextGlyph></SmallBtn>
        <Input $w={63} $ml={10} $h={17}>12 pt</Input>
        <ChevBtn $ml={1} $h={17}><Chev /></ChevBtn>
        <SmallBtn $w={26} $ml={11}><StyleBold>B</StyleBold></SmallBtn>
        <SmallBtn $w={26}><StyleBold $i>I</StyleBold></SmallBtn>
        <SmallBtn $w={26}><StyleBold $u>U</StyleBold></SmallBtn>
        <Swatch $w={40} $ml={10} />
        <Sep $ml={9} />
        <GlyphMark $ml={10}>a</GlyphMark>
        <Select $w={108} $ml={12}>[Aucun style]<Chev /></Select>
        <SmallBtn $w={44} $ml={8} $dim>¶</SmallBtn>
        <SmallBtn $w={46} $ml={5} $h={21}>a</SmallBtn>
        <BarLabel $ml={10} $size={13}>¶</BarLabel>
        <Select $w={108} $ml={11}>[Aucun style]<Chev /></Select>
        <SmallBtn $w={44} $ml={8} $dim>¶</SmallBtn>
        <SmallBtn $w={46} $ml={5} $h={21}>¶</SmallBtn>
        <Sep $ml={6} />
        <SmallBtn $w={26} $ml={10} $dark><TextAlign rows={[[1, 12], [1, 8], [1, 12], [1, 9], [1, 12]]} /></SmallBtn>
        <SmallBtn $w={26}><TextAlign rows={[[1, 12], [3, 8], [1, 12], [3, 8], [1, 12]]} /></SmallBtn>
        <SmallBtn $w={27}><TextAlign rows={[[1, 12], [5, 8], [1, 12], [5, 8], [1, 12]]} /></SmallBtn>
        <SmallBtn $w={26}><TextAlign rows={[[1, 12], [1, 12], [1, 12], [1, 12], [1, 12]]} /></SmallBtn>
        <ChevBtn $w={13} $h={18}><Chev /></ChevBtn>
        <SmallBtn $w={27} $ml={12}><TextAlign rows={[[1, 12], [1, 9], [1, 12], [1, 6], [1, 9]]} /></SmallBtn>
        <ChevBtn $w={13} $h={18}><Chev /></ChevBtn>
        <SmallBtn $w={26} $ml={12}><TextAlign rows={[[4, 9], [1, 1], [4, 9], [1, 1], [4, 9]]} /></SmallBtn>
        <SmallBtn $w={27}><TextAlign rows={[[5, 8], [1, 2], [5, 8], [1, 2], [5, 8]]} /></SmallBtn>
        <Input $w={65} $ml={9}>[12,4 pt]</Input>
        <ChevBtn $ml={0} $h={19}><Chev /></ChevBtn>
        <Sep $ml={10} />
        <BarLabel $ml={6} $size={14}>Colonnes:</BarLabel>
        <Input $w={34} $ml={7} $h={20}>1</Input>
        <Spin ml={1} h={18} />
        <Input $w={55} $ml={9} $dim>50 %</Input>
        <Spin ml={0} h={18} />
        <Sep $ml={11} />
        <SmallBtn $w={46} $ml={5} $h={20}><Ico w={16} h={16}><path d="M4 2h12v16H4z" stroke="#ddd" /><text x="10" y="14" textAnchor="middle" fontSize="11" fontFamily="Liberation Sans" fill="#ddd">T</text></Ico></SmallBtn>
        <SmallBtn $w={46} $ml={4} $h={20}>fi</SmallBtn>
        <Sep $ml={6} />
        <CheckBox $ml={6} $checked><svg width="8" height="7" viewBox="0 0 8 7" fill="none"><path d="M1 4l2 2 4-5" stroke="#ddd" /></svg></CheckBox>
        <BarLabel $ml={5} $dim>Sélection auto.:</BarLabel>
        <Select $w={77} $ml={10}>Défaut<Chev /></Select>
        <Sep $ml={7} />
        <SmallBtn $w={26} $ml={10}><Ico w={15} h={15}><circle cx="10" cy="10" r="7" stroke="#ddd" /><path d="M10 0v20M0 10h20" stroke="#ddd" /></Ico></SmallBtn>
        <SmallBtn $w={26}><Ico w={15} h={15}><path d="M3 3h14v14H3z" stroke="#ccc" /><circle cx="10" cy="10" r="3" fill="#ddd" /></Ico></SmallBtn>
        <SmallBtn $w={26}><Ico w={15} h={15}><path d="M3 3h14v14H3zM10 3v14" stroke="#ccc" /></Ico></SmallBtn>
        <SmallBtn $w={26}><Ico w={15} h={15}><path d="M3 3h14v14H3z" stroke="#ccc" strokeDasharray="2 2" /></Ico></SmallBtn>
        <ConvertBtn>
          <Ico w={18} h={18}><path d="M3 3h14v14H3z" stroke="#ddd" strokeDasharray="8 6" /><path d="M9 8l3 2-3 2z" fill="#ddd" /></Ico>
          Convertir en courbes
        </ConvertBtn>
        <Sep $ml={7} />
        <SmallBtn $w={26} $ml={10}><AlignBars d="M4 3h8v5H4zM4 10h11v5H4z" rule="M2 1v16" /></SmallBtn>
        <SmallBtn $w={26}><AlignBars d="M5 3h8v5H5zM3 10h12v5H3z" rule="M9 1v16" /></SmallBtn>
        <SmallBtn $w={26}><AlignBars d="M6 3h8v5H6zM3 10h11v5H3z" rule="M16 1v16" /></SmallBtn>
        <SmallBtn $w={26} $ml={12}><AlignBars d="M3 4h5v10H3zM10 4h5v7h-5z" rule="M1 2h16" /></SmallBtn>
        <SmallBtn $w={26}><AlignBars d="M3 3h5v12H3zM10 5h5v8h-5z" rule="M1 9h16" /></SmallBtn>
        <SmallBtn $w={26}><AlignBars d="M3 3h5v11H3zM10 7h5v7h-5z" rule="M1 16h16" /></SmallBtn>
      </ContextBar>

      <Workspace>
        <ToolColumn>
          <ToolSlot $active><Ico w={16} h={19}><path d="M5 1v15l4-3 3 6 3-1-3-6h5z" stroke="#ddd" strokeWidth="1.2" /></Ico></ToolSlot>
          <ToolSlot><Ico w={16} h={16}><path d="M3 2v16l15-8z" fill="#e8e8e8" /></Ico></ToolSlot>
          <ToolSep />
          <ToolSlot><Ico w={20} h={19}><rect x="1" y="2" width="18" height="16" fill="#2a4250" stroke="#9cc" /><path d="M5 6h10v2H11v8H9V8H5z" fill="#dff" /></Ico></ToolSlot>
          <ToolSlot><Ico w={20} h={19}><rect x="1" y="2" width="18" height="16" stroke="#e67b2b" strokeWidth="1.5" /><path d="M1 7h18M1 12h18M7 2v16" stroke="#e67b2b" strokeWidth="1.5" /><path d="M8 8h10v3H8zM8 13h10v3H8z" fill="#d8d8a8" /></Ico></ToolSlot>
          <ToolSlot><Ico w={20} h={19}><rect x="2" y="3" width="16" height="14" fill="#2a3a48" stroke="#3f7fb5" /><text x="10" y="15" textAnchor="middle" fontSize="13" fontFamily="Liberation Sans" fill="#ddd">A</text></Ico></ToolSlot>
          <ToolSlot><Ico w={22} h={22}><path d="M2 18 6 9l5-3 4 4-3 5z" fill="#ccc" /><path d="M13 5l2-3 4 4-3 2z" fill="#f0604d" /><path d="M2 18l5-5" stroke="#333" /></Ico></ToolSlot>
          <ToolSlot><Ico w={22} h={20}><rect x="2" y="2" width="15" height="14" rx="1" fill="#283238" stroke="#999" strokeWidth="1.5" /><path d="M14 20l5-5v5z" fill="#eee" /></Ico></ToolSlot>
          <ToolSlot><Ico w={20} h={16}><rect x="1" y="3" width="18" height="14" stroke="#ddd" strokeWidth="1.4" /><path d="M1 3l18 14M19 3 1 17" stroke="#888" strokeWidth="0.8" /></Ico></ToolSlot>
          <ToolSlot><Ico w={20} h={18}><circle cx="10" cy="10" r="8.5" stroke="#ccc" strokeWidth="1.3" /><path d="M4 4l12 12M16 4 4 16" stroke="#888" strokeWidth="0.8" /></Ico></ToolSlot>
          <ToolSlot><Ico w={20} h={17}><rect x="1" y="3" width="18" height="14" fill="#3f86b0" /><path d="M1 12c4-3 7 1 18-2v7H1z" fill="#1f6082" /><path d="M5 7h6v1H5z" fill="#dde" /></Ico></ToolSlot>
          <ToolSlot><Ico w={20} h={18}><rect x="1" y="2" width="10" height="13" stroke="#c8c88f" /><rect x="9" y="5" width="10" height="13" fill="#333" stroke="#c8c88f" /><path d="M6 15 12 7v8z" fill="#7d8c2a" /><path d="M3 5h6M3 8h6M13 9h4M13 12h4M13 15h4" stroke="#ccc" /></Ico></ToolSlot>
          <ToolSep />
          <ToolSlot><Ico><path d="M6 1v14h13M1 5h13v14" stroke="#e0e0e0" strokeWidth="2" /><path d="M2 18 18 2" stroke="#999" /></Ico></ToolSlot>
          <ToolSep />
          <ToolSlot><Ico><path d="M3 14 11 4l6 6-8 8z" fill="#6aa7d8" /><path d="M10 5l3 3-5 6-3-3z" fill="#d9b888" /><path d="M2 18 18 2" stroke="#ddd" strokeWidth="1.4" /></Ico></ToolSlot>
          <ToolSlot><Ico><path d="M4 2v7a6 6 0 0 0 12 0V2" stroke="#ddd" strokeWidth="1.5" /><path d="M5 5h10v4a5 5 0 0 1-10 0z" fill="#3f6f90" /><path d="M10 15v3M5 19h10" stroke="#ddd" strokeWidth="1.5" /></Ico></ToolSlot>
          <ToolSlot><Ico w={21} h={20}><path d="M2 18 11 9" stroke="#ddd" strokeWidth="2.4" /><ellipse cx="14" cy="6" rx="4" ry="5" transform="rotate(45 14 6)" fill="#b57a55" /><path d="M15 19l4-4v4z" fill="#eee" /></Ico></ToolSlot>
          <ToolSep />
          <ToolSlot><FaHand size={19} color="#e5cdb8" /></ToolSlot>
          <ToolSlot><Ico w={21} h={21}><circle cx="12" cy="8" r="6" fill="#8cc8ec" stroke="#ddd" strokeWidth="1.8" /><path d="M8 12l-6 6" stroke="#cf9a70" strokeWidth="3" /></Ico></ToolSlot>
          <ColorWidget>
            <svg width="30" height="50" viewBox="0 0 30 50" fill="none">
              <circle cx="15" cy="17" r="11" stroke="#fff" strokeWidth="5" />
              <circle cx="15" cy="27" r="13" fill="#000" stroke="#555" strokeWidth="1.5" />
              <path d="M21 8l4 4" stroke="#f02030" strokeWidth="4" />
              <path d="M8 43c3 3 11 3 14 0" stroke="#888" />
            </svg>
          </ColorWidget>
        </ToolColumn>

        <PagesPanel>
          <PanelHeader $h={31}>
            <Grip />
            <Tab $active>Pages</Tab>
            <Tab>Stock</Tab>
            <Hamburger $mr={14} />
          </PanelHeader>
          <SectionRow>
            <ChevRight /><SectionName>Maquettes</SectionName>
            <SectionIcons><NewPage lines /><DupPage /><Trash /></SectionIcons>
          </SectionRow>
          <SectionRow $mt={2}>
            <Chev /><SectionName>Pages</SectionName>
            <SectionIcons>
              <PagesFlag><Ico w={15} h={13}><path d="M1 2h18M9 7h10M9 11h10M9 15h10" stroke="#bbb" strokeWidth="1.6" /><path d="M1 5h7v13l-3.5-3L1 18z" fill="#ddd" /></Ico></PagesFlag>
              <NewPage /><DupPage /><Trash />
            </SectionIcons>
          </SectionRow>
          <Thumb><ThumbPage><PageLines /></ThumbPage></Thumb>
          <ThumbLabel>Page 1</ThumbLabel>
        </PagesPanel>

        <CanvasColumn>
          <DocTab>&lt;Sans titre&gt; [Modifié] (306,6%)</DocTab>
          <Canvas>
            <Page>
              <PageText><PageLines /></PageText>
              <RotateStem />
              <Handle $x={579} $y={-30} />
              <Handle $x={0} $y={0} />
              <Handle $x={579} $y={0} />
              <Handle $x={1158} $y={0} />
              <Handle $x={0} $y={361} />
              <Handle $x={1158} $y={361} />
              <Handle $x={0} $y={723} />
              <Handle $x={579} $y={723} />
              <Handle $x={1158} $y={723} />
              <Handle $x={1167} $y={734} />
              <TextPort $x={0} $y={145} />
              <TextPort $x={1158} $y={579} />
            </Page>
          </Canvas>
          <HScroll>
            <Triangle dir="l" />
            <HThumb />
            <Triangle dir="r" />
          </HScroll>
        </CanvasColumn>

        <CanvasGutter>
          <GutterClose>X</GutterClose>
          <GutterUp><Triangle dir="u" /></GutterUp>
          <GutterThumb />
          <GutterDown><Triangle dir="d" /></GutterDown>
        </CanvasGutter>

        <RightDock>
          <PanelHeader $h={28}>
            <Grip />
            <Tab $active>Couleur</Tab>
            <Tab>Échantillons</Tab>
            <Tab>Trait</Tab>
            <Hamburger />
          </PanelHeader>
          <ColorBody>
            <ColorCluster width="90" height="50" viewBox="0 0 90 50" fill="none">
              <circle cx="13" cy="17" r="9.5" stroke="#fff" strokeWidth="5" />
              <path d="M20 10l3 3M4 22l4-1" stroke="#f05050" strokeWidth="3" />
              <circle cx="26" cy="31" r="12" fill="#000" stroke="#555" strokeWidth="1.5" />
              <circle cx="8" cy="37" r="5.5" fill="#ddd" />
              <path d="M4.5 40.5l7-7" stroke="#e8343c" strokeWidth="2" />
              <path d="M27 9c4 0 7 3 7 7M25 9l3-2M25 9l3 2M35 16l-3-1M35 16l1-3" stroke="#999" />
              <path d="M50 25l8-8" stroke="#ddd" strokeWidth="2.4" />
              <ellipse cx="62" cy="13" rx="4" ry="5.5" transform="rotate(45 62 13)" fill="#b57a55" />
              <circle cx="75" cy="15" r="7" fill="#ff0000" stroke="#2e2e2e" strokeWidth="1.5" />
            </ColorCluster>
            <ColorWell>
              <LockBtn><Lock /></LockBtn>
              <Select $w={78}>RVB<Chev /></Select>
            </ColorWell>
            <SliderRow><SliderLabel>R:</SliderLabel><Track $to="#ff0000" $w={183}><Knob $x={5} /></Track><ValueBox>0</ValueBox></SliderRow>
            <SliderRow><SliderLabel>V:</SliderLabel><Track $to="#00ff00" $w={183}><Knob $x={5} /></Track><ValueBox>0</ValueBox></SliderRow>
            <SliderRow><SliderLabel>B:</SliderLabel><Track $to="#0000ff" $w={183}><Knob $x={5} /></Track><ValueBox>0</ValueBox></SliderRow>
            <Spectrum />
            <SmallCaption>Opacité</SmallCaption>
            <OpacityRow>
              <OpacityDot />
              <OpacityTrack><Knob $x={141} /></OpacityTrack>
              <Input $w={44} $ml={2}>100 %</Input>
              <ChevBtn $h={18}><Chev /></ChevBtn>
            </OpacityRow>
          </ColorBody>

          <LayersPanel>
            <PanelHeader $h={28}>
              <Grip />
              <Tab $active>Calques</Tab>
              <Tab>Styles de texte</Tab>
              <Hamburger />
            </PanelHeader>
            <LayerControls>
              <RowLabel>Opacité:</RowLabel>
              <Input $w={55} $ml={3} $h={20}>100 %<Chev /></Input>
              <Select $w={108} $ml={5}>Normal<Chev /></Select>
              <SmallIconWrap><Ico w={13} h={13}><circle cx="10" cy="10" r="6.5" stroke="#8d8d8d" strokeWidth="3" /><circle cx="10" cy="10" r="9" stroke="#8d8d8d" strokeWidth="2" strokeDasharray="3 2.6" /></Ico></SmallIconWrap>
              <SmallIconWrap><Lock /></SmallIconWrap>
            </LayerControls>
            <LayerRow $selected $h={38}>
              <LayerKind><Ico w={10} h={10}><path d="M1 1h18v18H1z" stroke="#ccc" strokeWidth="1.5" /><path d="M6 6h8M10 6v9" stroke="#ccc" strokeWidth="1.5" /></Ico></LayerKind>
              <LayerThumb />
              <LayerName>Fhjdhfkbdjvbjednv...</LayerName>
              <LayerDot />
            </LayerRow>
            <LayerRow $h={38}>
              <LayerKind><Ico w={10} h={10}><path d="M1 1h18v18H1zM5 7h10M5 11h10M5 15h10" stroke="#ccc" strokeWidth="1.5" /></Ico></LayerKind>
              <LayerThumb $mark />
              <LayerName>Planche type A</LayerName>
              <LayerDot />
            </LayerRow>
            <LayerEmpty />
            <LayerStrip>
              <StripActive><Ico w={17} h={17}><path d="M2 2h11v11H2z" stroke="#aaa" strokeWidth="1.5" /><path d="M5 14v3h10V6h3" stroke="#777" strokeWidth="1.5" /></Ico></StripActive>
              <StripCenter>
                <Ico w={16} h={14}><rect width="20" height="20" rx="2" fill="#aaa" /><circle cx="10" cy="10" r="5.5" fill="#333" /></Ico>
                <Ico w={16} h={16}><circle cx="10" cy="10" r="9" stroke="#aaa" strokeWidth="1.4" /><path d="M10 4a6 6 0 0 1 0 12 8 8 0 0 0-6-3z" fill="#aaa" /></Ico>
                <Ico w={16} h={16}><path d="M1 2h18M1 18h18" stroke="#aaa" strokeWidth="1.5" /><text x="10" y="15" textAnchor="middle" fontSize="13" fontWeight="700" fontFamily="Liberation Sans" fill="#aaa">FX</text></Ico>
              </StripCenter>
              <StripRight>
                <Ico w={15} h={15}><path d="M2 2h11M2 2v16h14V7M5 8h8M5 11h8M5 14h8M15 1v5M13 3h5" stroke="#aaa" strokeWidth="1.5" /></Ico>
                <Ico w={14} h={15}><path d="M2 5h16M7 5V2h6v3M4 5v14h12V5M8 8v8M12 8v8" stroke="#aaa" strokeWidth="1.5" /></Ico>
              </StripRight>
            </LayerStrip>
          </LayersPanel>

          <PanelHeader $h={30}>
            <Grip />
            <Tab $active>Transformer</Tab>
            <Tab>Navigateur</Tab>
            <Tab>Historique</Tab>
            <Hamburger />
          </PanelHeader>
          <TransformBody>
            <AnchorGrid>
              <AnchorDot $on /><AnchorDot /><AnchorDot />
              <AnchorDot /><AnchorDot /><AnchorDot />
              <AnchorDot /><AnchorDot /><AnchorDot />
            </AnchorGrid>
            <TransformFields>
              <TfRow>
                <TfLabel $w={15}>X:</TfLabel><Input $w={65} $h={20}>0 mm</Input>
                <TfLabel $w={25}>L:</TfLabel><Input $w={65} $h={20}>88 mm</Input>
                <ChainLink><Ico w={10} h={22}><path d="M4 1h12v7H4zM4 12h12v7H4zM1 10h18" stroke="#999" strokeWidth="1.5" /></Ico></ChainLink>
              </TfRow>
              <TfRow $mt={4}>
                <TfLabel $w={15}>Y:</TfLabel><Input $w={65} $h={20}>0 mm</Input>
                <TfLabel $w={25}>H:</TfLabel><Input $w={65} $h={20}>55 mm</Input>
              </TfRow>
              <TfRow $mt={10}>
                <TfLabel $w={15}>R:</TfLabel><Input $w={65} $h={20}>0 °<Chev /></Input>
                <TfLabel $w={25}>S:</TfLabel><Input $w={65} $h={20}>0 °<Chev /></Input>
              </TfRow>
              <TfRow $mt={8}>
                <SmallBtn $w={30} $ml={125} $h={26} $dim>▣</SmallBtn>
                <ChevBtn $w={14} $h={26}><Chev /></ChevBtn>
              </TfRow>
            </TransformFields>
          </TransformBody>
        </RightDock>

        <CharacterFloat>
          <CharacterPanel>
            <CharHeader>
              <Grip />
              <Tab $active>Caractère</Tab>
              <Hamburger />
              <CloseDot>×</CloseDot>
            </CharHeader>
            <CharRow $mt={7}>
              <Select $w={70}>Tout<Chev /></Select>
              <Input $w={158} $ml={8}>Arial</Input>
              <ChevBtn $ml={1}><Chev /></ChevBtn>
            </CharRow>
            <CharRow $mt={7}>
              <Input $w={56}>12 pt</Input>
              <ChevBtn $ml={0}><Chev /></ChevBtn>
              <Select $w={64} $ml={8}>Regular<Chev /></Select>
              <SmallBtn $w={26} $ml={13} $dim><TextGlyph $size={11}>V</TextGlyph></SmallBtn>
              <Swatch $w={28} $ml={7} />
              <NoneSwatch $ml={6} />
            </CharRow>
            <CharRow $mt={7}>
              <Select $w={249}>[Aucun style]<Chev /></Select>
            </CharRow>
            <Fold $mt={7}><FoldGlyph><Chev /></FoldGlyph>Décorations</Fold>
            <CharRow $mt={6}>
              <Deco $dark>U</Deco>
              <Deco><DecoSingle>U</DecoSingle></Deco>
              <Deco><DecoDouble>U</DecoDouble></Deco>
              <NoneSwatch $ml={6} />
              <Deco $dark $ml={7}>S</Deco>
              <Deco><DecoStrike>S</DecoStrike></Deco>
              <Deco><DecoStrike>S</DecoStrike></Deco>
              <NoneSwatch $ml={5} />
            </CharRow>
            <CharRow $mt={8} $h={20}>
              <DecoLine>Aucun</DecoLine>
              <NoneSwatch $ml={6} />
            </CharRow>
            <Fold $mt={6}><FoldGlyph><Chev /></FoldGlyph>Position et Transformer</Fold>
            <CharRow $mt={5} $h={20} $pl={10}>
              <FieldIcon><TextGlyph $size={11}>V/A</TextGlyph></FieldIcon>
              <Input $w={66} $ml={5} $h={20}>Auto</Input><ChevBtn $ml={0} $h={20}><Chev /></ChevBtn><Spin ml={3} h={20} />
              <FieldIcon $ml={16}><TextGlyph $size={15} $serif $i>T</TextGlyph></FieldIcon>
              <Input $w={81} $ml={0} $h={20}>0 °</Input><Spin h={20} />
            </CharRow>
            <CharRow $mt={6} $h={20} $pl={10}>
              <FieldIcon><TextGlyph $size={11}>VA</TextGlyph></FieldIcon>
              <Input $w={66} $ml={5} $h={20}>0 ‰</Input><ChevBtn $ml={0} $h={20}><Chev /></ChevBtn><Spin ml={3} h={20} />
              <FieldIcon $ml={16}><TextGlyph $size={14} $serif>T</TextGlyph></FieldIcon>
              <Input $w={81} $ml={0} $h={20}>100 %</Input><Spin h={20} />
            </CharRow>
            <CharRow $mt={6} $h={20} $pl={10}>
              <FieldIcon><TextGlyph $size={11}>↕A</TextGlyph></FieldIcon>
              <Input $w={66} $ml={5} $h={20}>0 pt</Input><ChevBtn $ml={0} $h={20}><Chev /></ChevBtn><Spin ml={3} h={20} />
              <FieldIcon $ml={16}><TextGlyph $size={14} $serif>↕T</TextGlyph></FieldIcon>
              <Input $w={81} $ml={0} $h={20}>100 %</Input><Spin h={20} />
            </CharRow>
            <CharRow $mt={6} $h={20} $pl={10}>
              <FieldIcon><TextGlyph $size={11}>↕A</TextGlyph></FieldIcon>
              <Input $w={66} $ml={5} $h={20}>(12,4 pt)</Input><ChevBtn $ml={0} $h={20}><Chev /></ChevBtn><Spin ml={3} h={20} />
              <FieldIcon $ml={16}><TextGlyph $size={13}>S:</TextGlyph></FieldIcon>
              <Select $w={89} $ml={0}>Aucun<Chev /></Select>
            </CharRow>
            <CharRow $mt={7} $pl={38}>
              <CheckBox /><Dim>Sans retour automatique</Dim>
            </CharRow>
            <Fold $mt={7}><FoldGlyph><ChevRight /></FoldGlyph>Langue</Fold>
            <Fold><FoldGlyph><ChevRight /></FoldGlyph>Alignement visuel</Fold>
            <Fold><FoldGlyph><ChevRight /></FoldGlyph>Typographie</Fold>
          </CharacterPanel>
          <ParagraphPanel>
            <ParaMain>
              <CharRow $mt={9} $h={20} $pl={11}>
                <SmallIcon d="M1 2h14M1 5h14M1 8h14M1 11h14" />
                <Input $w={42} $ml={3} $h={20}>0 mm</Input><Spin h={20} />
                <FieldIcon $w={16} $ml={9}><SmallIcon d="M1 2h10M1 5h10M1 8h10M1 11h14" /></FieldIcon>
                <Input $w={42} $ml={3} $h={20}>0 mm</Input><Spin h={20} />
                <FieldIcon $w={16} $ml={7}><SmallIcon d="M1 2h14M3 5h10M8 6v6M6 10l2 2 2-2" /></FieldIcon>
                <Input $w={42} $ml={1} $h={20}>12 pt</Input><Spin h={20} />
              </CharRow>
              <CharRow $mt={9} $h={14}>
                <CheckBox /><Dim>Espace entre les styles ident</Dim>
                <Input $w={42} $ml={23} $h={20} $dim>0 pt</Input><Spin h={20} />
              </CharRow>
              <CharRow $mt={10} $h={14}>
                <CheckBox /><Dim>Somme de l'espace avant et après</Dim>
              </CharRow>
              <CharRow $mt={8} $h={18} $pl={6}>
                <RowLabel $w={72}>Espace avant:</RowLabel>
                <Select $w={160} $h={18}>Seulement entre les paragrap<Chev /></Select>
              </CharRow>
              <CharRow $mt={10} $h={14}>
                <CheckBox><svg width="8" height="7" viewBox="0 0 8 7" fill="none"><path d="M1 4l2 2 4-5" stroke="#ddd" /></svg></CheckBox>
                <Dim>Aligner sur la grille de référence</Dim>
              </CharRow>
              <Fold $mt={9}><FoldGlyph><ChevRight /></FoldGlyph>Taquets de tabulation</Fold>
              <Fold><FoldGlyph><Chev /></FoldGlyph>Justification</Fold>
              <CharRow $mt={6} $h={20}>
                <FieldIcon $w={18}><SmallIcon d="M1 4h5M9 4h5M2 9h11" /></FieldIcon>
                <Input $w={53} $h={20}>80 %<Chev /></Input>
                <FieldIcon $w={28}><SmallIcon d="M5 4h2M9 4h2M5 8l3 3 3-3" /></FieldIcon>
                <Input $w={53} $h={20}>100 %<Chev /></Input>
                <FieldIcon $w={27}><SmallIcon d="M3 4h4M9 4h4M2 9h12" /></FieldIcon>
                <Input $w={53} $h={20}>133 %<Chev /></Input>
              </CharRow>
              <CharRow $mt={6} $h={20}>
                <FieldIcon $w={18}><TextGlyph $size={10}>AZ</TextGlyph></FieldIcon>
                <Input $w={53} $h={20}>0 %<Chev /></Input>
                <FieldIcon $w={28}><TextGlyph $size={10}>AZ</TextGlyph></FieldIcon>
                <Input $w={53} $h={20}>0 %<Chev /></Input>
                <FieldIcon $w={27}><TextGlyph $size={10}>AZ</TextGlyph></FieldIcon>
                <Input $w={53} $h={20}>0 %<Chev /></Input>
              </CharRow>
              <Fold $mt={6}><FoldGlyph><Chev /></FoldGlyph>Options d'enchaînement</Fold>
              <CharRow $mt={7} $h={18}>
                <RowLabel $w={112} $right>Début:</RowLabel>
                <Select $w={115} $ml={7} $h={18}>N'importe où<Chev /></Select>
              </CharRow>
              <CharRow $mt={8} $h={14}>
                <CheckBox /><Dim>Conserver avec paragraphe précédent</Dim>
              </CharRow>
              <CharRow $mt={8} $h={14}>
                <CheckBox /><Dim>Empêcher les premières lignes orphelines</Dim>
              </CharRow>
              <CharRow $mt={8} $h={14}>
                <CheckBox /><Dim>Paragraphe solidaire</Dim>
              </CharRow>
              <CharRow $mt={8} $h={14}>
                <CheckBox /><Dim>Empêcher les dernières lignes veuves</Dim>
              </CharRow>
              <CharRow $mt={7} $h={20} $pl={6}>
                <RowLabel $w={117}>Paragraphes solidaires:</RowLabel>
                <Input $w={45} $h={20}>0</Input>
                <Spin h={20} />
                <Dim $ml={6}>lignes</Dim>
              </CharRow>
              <Fold $mt={6}><FoldGlyph><ChevRight /></FoldGlyph>Puces et Numéros</Fold>
              <Fold><FoldGlyph><ChevRight /></FoldGlyph>Césure</Fold>
            </ParaMain>
            <ParaScrollThumb />
            <ParaScrollDown><Triangle dir="d" s={8} /></ParaScrollDown>
          </ParagraphPanel>
        </CharacterFloat>

        <GlyphFloat>
          <PanelHeader $h={29}>
            <Grip />
            <Tab $active>Navigateur de glyphes</Tab>
            <Hamburger />
            <CloseDot>×</CloseDot>
          </PanelHeader>
          <GlyphFilters>
            <GlyphRow>
              <Input $w={134} $h={20}>Arial</Input>
              <ChevBtn $ml={1} $h={20}><Chev /></ChevBtn>
              <Select $w={83} $ml={6}>Regular<Chev /></Select>
              <SmallIconWrap><Lock /></SmallIconWrap>
            </GlyphRow>
            <Select $w={256} $h={17}>Tout<Chev /></Select>
          </GlyphFilters>
          <GlyphBody>
            <GlyphGrid>
              {GLYPHS.map((g, i) => (
                <GlyphCell key={i}>{g}</GlyphCell>
              ))}
            </GlyphGrid>
            <GlyphScroll>
              <Triangle dir="u" s={9} />
              <GlyphScrollDot />
              <GlyphPush><Triangle dir="d" s={9} /></GlyphPush>
            </GlyphScroll>
          </GlyphBody>
          <SearchBar>
            <SearchInput>
              <Ico w={13} h={13}><circle cx="8" cy="8" r="6" stroke="#ccc" strokeWidth="1.6" /><path d="M12.5 12.5 19 19" stroke="#ccc" strokeWidth="1.6" /></Ico>
              Rechercher
            </SearchInput>
          </SearchBar>
          <GlyphFoot>
            <Triangle dir="l" c="#666" />
            <Triangle dir="r" c="#666" />
          </GlyphFoot>
        </GlyphFloat>
      </Workspace>

      <StatusBar>
        <NavGroup>
          <svg width="10" height="12" viewBox="0 0 10 12"><path d="M1 1v10" stroke="#777" /><polygon points="9,1 9,11 3,6" fill="#777" /></svg>
          <Triangle dir="l" c="#999" />
        </NavGroup>
        <PageCount>1 sur 1</PageCount>
        <NavGroup $ml={23} $gap={8}>
          <Triangle dir="r" c="#ddd" />
          <svg width="10" height="12" viewBox="0 0 10 12"><path d="M9 1v10" stroke="#777" /><polygon points="1,1 1,11 7,6" fill="#777" /></svg>
          <Ico w={11} h={15}><path d="M2 1h16v18H2zM5 5h10M5 8h10M5 11h10M5 14h10" stroke="#ccc" strokeWidth="1.6" /></Ico>
          <Ico w={13} h={13}><path d="M2 5h12a3.5 3.5 0 0 1 0 8H8M8 10l-3 3 3 3" stroke="#666" strokeWidth="1.5" /></Ico>
        </NavGroup>
        <NavGroup $ml={15}>
          <Ico w={14} h={17}><path d="M2 1h16v18H2z" stroke="#999" /><path d="M3 2h13v8c0 4-3 6-6.5 8C6 16 3 14 3 10z" fill="#1fbd6a" /><path d="M6 9l3 3 5-6" stroke="#fff" strokeWidth="1.5" /></Ico>
        </NavGroup>
        <StatusText>
          "Fhjdhfkbdjvbjednvbgikjdhn" sélectionné(s). <b>Glisser</b> pour déplacer la sélection. <b>Cliquer</b> sur un autre objet pour le sélectionner. <b>Cliquer</b> sur une zone vide pour annuler la sélection. <b>Renvoyer</b> pour saisir/dupliquer des valeurs.
        </StatusText>
      </StatusBar>
      <BottomEdge />
    </Window>
  );
};

export default App;
